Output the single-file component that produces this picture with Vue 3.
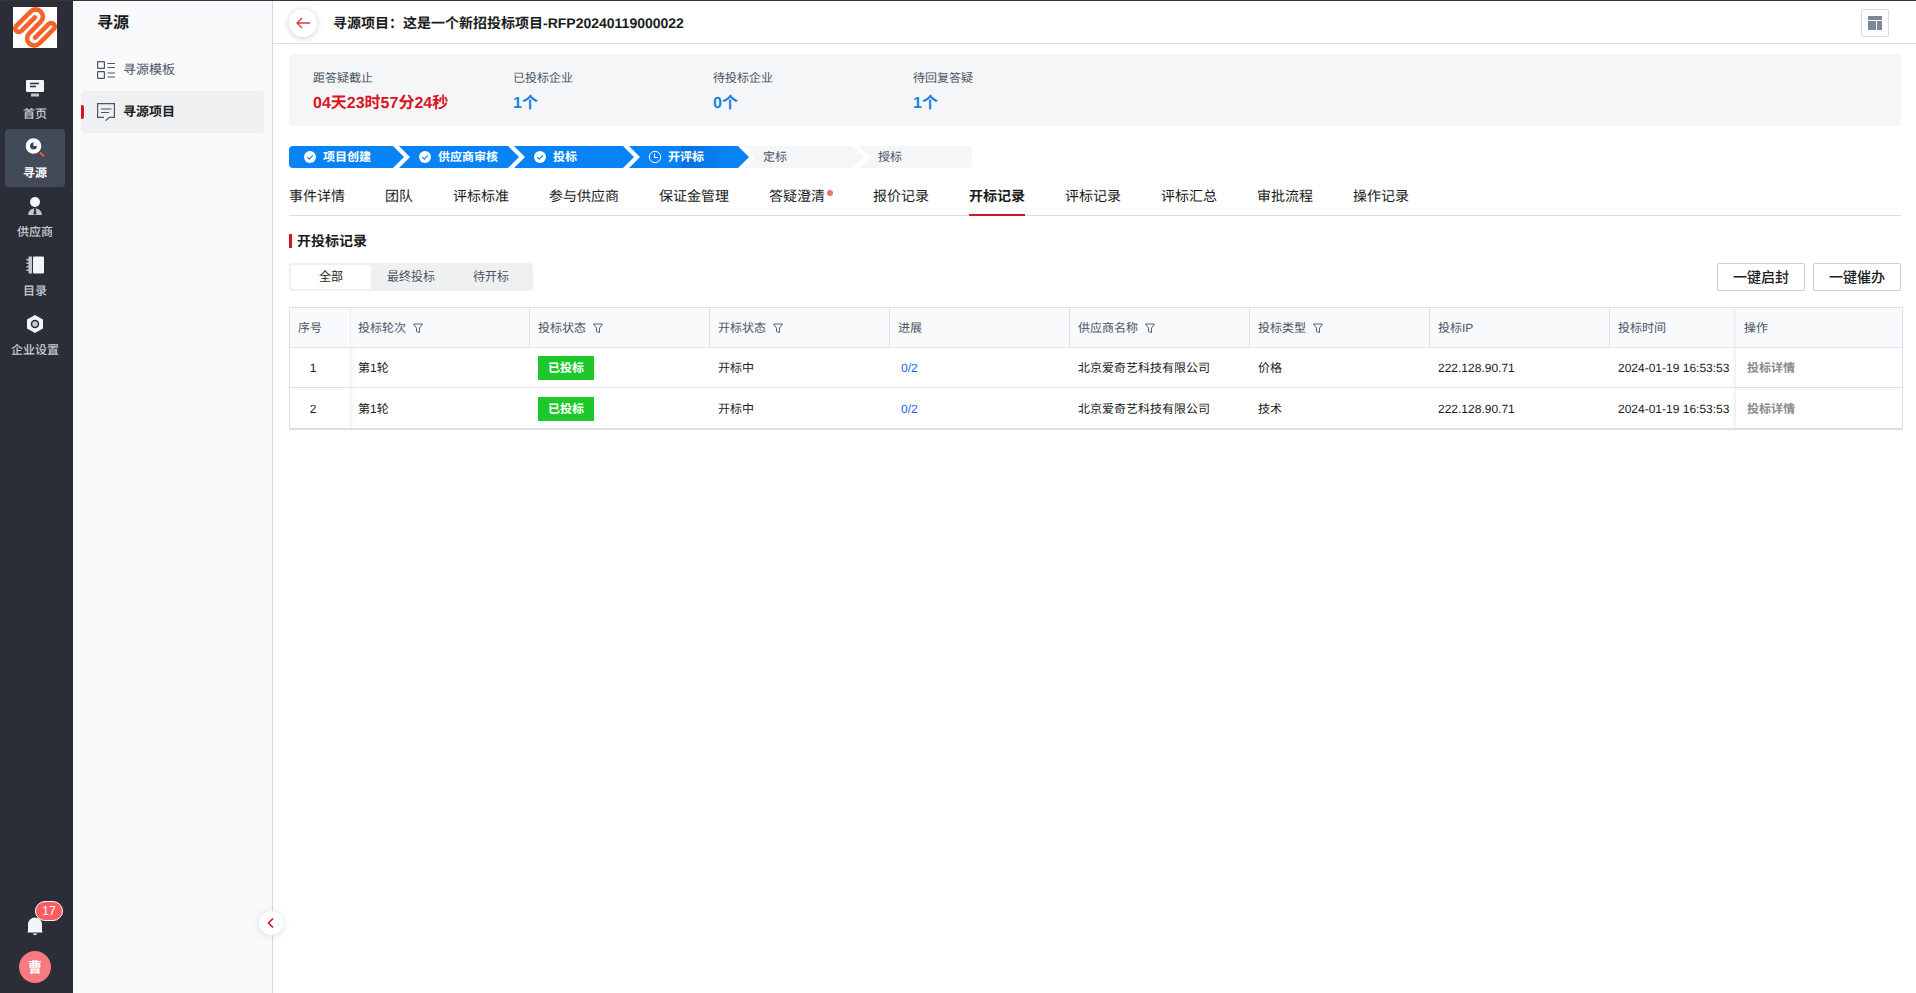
<script setup>
const rail = [
  { id: 'home', label: '首页' },
  { id: 'source', label: '寻源', active: true },
  { id: 'supplier', label: '供应商' },
  { id: 'catalog', label: '目录' },
  { id: 'settings', label: '企业设置' },
]
const stats = [
  { label: '距答疑截止', value: '04天23时57分24秒', urgent: true },
  { label: '已投标企业', value: '1个' },
  { label: '待投标企业', value: '0个' },
  { label: '待回复答疑', value: '1个' },
]
const steps = [
  { label: '项目创建', state: 'done' },
  { label: '供应商审核', state: 'done' },
  { label: '投标', state: 'done' },
  { label: '开评标', state: 'current' },
  { label: '定标', state: 'todo' },
  { label: '授标', state: 'todo' },
]
const tabs = [
  { label: '事件详情' }, { label: '团队' }, { label: '评标标准' }, { label: '参与供应商' },
  { label: '保证金管理' }, { label: '答疑澄清', dot: true }, { label: '报价记录' },
  { label: '开标记录', active: true }, { label: '评标记录' }, { label: '评标汇总' },
  { label: '审批流程' }, { label: '操作记录' },
]
const columns = [
  { label: '序号', cls: 'c-index' },
  { label: '投标轮次', filter: true, cls: 'c-round' }, { label: '投标状态', filter: true },
  { label: '开标状态', filter: true }, { label: '进展' },
  { label: '供应商名称', filter: true }, { label: '投标类型', filter: true },
  { label: '投标IP' }, { label: '投标时间', cls: 'c-time' }, { label: '操作', cls: 'c-action' },
]
const rows = [
  { no: 1, type: '价格' },
  { no: 2, type: '技术' },
]
</script>

<template>
  <div class="app">
    <nav class="rail" aria-label="主导航">
      <a href="#" class="logo" aria-label="主页">
        <svg viewBox="0 0 44 41" width="44" height="41">
          <path
            transform="translate(22 20.5) rotate(-45)"
            d="M7 -7.200H-12a3.600 3.600 0 0 1 0-7.200H8.200a7.200 7.200 0 0 1 0 14.400H-8.200a7.200 7.200 0 0 0 0 14.400H12a3.600 3.600 0 0 0 0-7.200H-7"
            fill="none" stroke="#f9602a" stroke-width="4.600" stroke-linecap="round"
          />
        </svg>
      </a>
      <ul class="rail-list">
        <li v-for="item in rail" :key="item.id">
          <a href="#" class="rail-item" :class="{ active: item.active }">
            <svg width="20" height="20" viewBox="0 0 20 20" aria-hidden="true">
              <template v-if="item.id === 'home'">
                <rect x="1" y="2" width="18" height="12" rx="1" fill="#f4f5f7" />
                <path d="M5 5.500h9M5 8.500h6" stroke="#2b2e36" stroke-width="1.300" />
                <rect x="6" y="15.500" width="8" height="3" rx=".5" fill="#c2c6ce" />
              </template>
              <template v-else-if="item.id === 'source'">
                <circle cx="8.500" cy="9" r="7.800" fill="#fff" />
                <circle cx="8.500" cy="9" r="3.500" fill="#3f4756" />
                <path d="M8.500 9V5.500A3.500 3.500 0 0 1 12 9z" fill="#fff" />
                <path d="M15 15.500l4 4" stroke="#f9602a" stroke-width="1.800" />
              </template>
              <template v-else-if="item.id === 'supplier'">
                <circle cx="10" cy="6" r="5" fill="#f4f5f7" />
                <path d="M3.200 19c0-4 2.600-6.500 6.800-6.500s6.800 2.500 6.800 6.500z" fill="#c2c6ce" />
                <path d="M8.800 12.500h2.400l-.4 2 .8 3-1.600 1.500-1.600-1.500.8-3z" fill="#2b2e36" />
              </template>
              <template v-else-if="item.id === 'catalog'">
                <path d="M3.500 1.500H7v17H3.500zM1.500 4h3v1.500h-3zM1.500 7.500h3V9h-3zM1.500 11h3v1.500h-3zM1.500 14.500h3V16h-3z" fill="#c2c6ce" />
                <rect x="8" y="1.500" width="11" height="17" rx="1" fill="#f4f5f7" />
              </template>
              <template v-else>
                <path d="M10 1l8 4.600v9L10 19l-8-4.400v-9z" fill="#f4f5f7" />
                <circle cx="10" cy="10" r="3.500" fill="#c2c6ce" stroke="#2b2e36" stroke-width="1.500" />
              </template>
            </svg>
            <span>{{ item.label }}</span>
          </a>
        </li>
      </ul>
      <button type="button" class="bell" aria-label="通知">
        <svg width="16" height="20" viewBox="0 0 16 20">
          <path d="M1 16V8.500a7 7 0 0 1 14 0V16z" fill="#f4f5f7" />
          <path d="M0.500 15.500h15v1h-15zM6 17.500h4a2 1.500 0 0 1-4 0z" fill="#f4f5f7" />
        </svg>
        <span class="badge">17</span>
      </button>
      <button type="button" class="avatar">曹</button>
    </nav>

    <aside class="side">
      <h2>寻源</h2>
      <a href="#" class="side-item">
        <svg width="18" height="18" viewBox="0 0 18 18" fill="none" stroke="#4b5565" stroke-width="1.200">
          <rect x=".6" y=".6" width="6.800" height="6.800" rx=".5" />
          <rect x=".6" y="10.600" width="6.800" height="6.800" rx=".5" />
          <path d="M10.500 2.500H18M10.500 6.500H18M10.500 12H18M10.500 16H18" />
        </svg>
        <span>寻源模板</span>
      </a>
      <a href="#" class="side-item active">
        <svg width="18" height="18" viewBox="0 0 18 18" fill="none" stroke="#4b5565" stroke-width="1.200">
          <path d="M7 14.400H.6V.6h16.800v13.800H12.500L8.500 17.600M4 6h10.500M4 9.500h8" />
        </svg>
        <span>寻源项目</span>
      </a>
      <button type="button" class="collapse" aria-label="收起">
        <svg width="12" height="12" viewBox="0 0 12 12" fill="none" stroke="#c9141f" stroke-width="1.600">
          <path d="M8 1.500L3.500 6 8 10.500" />
        </svg>
      </button>
    </aside>

    <main class="main">
      <header class="top">
        <button type="button" class="back" aria-label="返回">
          <svg width="14" height="12" viewBox="0 0 14 12" fill="none" stroke="#e0363f" stroke-width="1.300">
            <path d="M14 6H1M6 1L1 6l5 5" />
          </svg>
        </button>
        <h1>寻源项目：这是一个新招投标项目-RFP20240119000022</h1>
        <button type="button" class="layout-btn" aria-label="布局">
          <svg width="14" height="14" viewBox="0 0 14 14" fill="#7d8796">
            <path d="M0 0h14v4H0zM0 5h8v9H0zM9 5h5v9H9z" />
          </svg>
        </button>
      </header>

      <div class="content">
        <dl class="stats">
          <div v-for="s in stats" :key="s.label" class="stat">
            <dt>{{ s.label }}</dt>
            <dd :class="{ urgent: s.urgent }">{{ s.value }}</dd>
          </div>
        </dl>

        <ol class="steps">
          <li v-for="s in steps" :key="s.label" :class="s.state">
            <svg v-if="s.state === 'done'" width="14" height="14" viewBox="0 0 14 14">
              <circle cx="7" cy="7" r="6" fill="#fff" />
              <path d="M4.300 7.200l2 1.900 3.500-3.700" fill="none" stroke="#0783f5" stroke-width="1.100" />
            </svg>
            <svg v-else-if="s.state === 'current'" width="14" height="14" viewBox="0 0 14 14" fill="none" stroke="#fff">
              <circle cx="7" cy="7" r="5.700" />
              <path d="M6.500 3.500v4h3.500" />
            </svg>
            <span>{{ s.label }}</span>
          </li>
        </ol>

        <nav class="tabs" aria-label="项目信息">
          <a v-for="t in tabs" :key="t.label" href="#" :class="{ active: t.active }">
            {{ t.label }}<i v-if="t.dot" class="dot"></i>
          </a>
        </nav>

        <h3>开投标记录</h3>

        <div class="tools">
          <div class="segment">
            <button type="button" class="active">全部</button>
            <button type="button">最终投标</button>
            <button type="button">待开标</button>
          </div>
          <div class="actions">
            <button type="button">一键启封</button>
            <button type="button">一键催办</button>
          </div>
        </div>
      </div>

      <table class="grid">
        <thead>
          <tr>
            <th v-for="c in columns" :key="c.label" scope="col" :class="c.cls">
              <span class="th">{{ c.label }}
                <button v-if="c.filter" type="button" class="filter" :aria-label="c.label + '筛选'">
                  <svg width="12" height="12" viewBox="0 0 12 12" fill="none" stroke="#566173">
                    <path d="M1.500 2h9L7.500 6v4.500L4.500 9.500V6z" />
                  </svg>
                </button>
              </span>
            </th>
          </tr>
        </thead>
        <tbody>
          <tr v-for="r in rows" :key="r.no">
            <td class="c-index">{{ r.no }}</td>
            <td>第1轮</td>
            <td><span class="tag">已投标</span></td>
            <td>开标中</td>
            <td class="c-link"><a href="#">0/2</a></td>
            <td>北京爱奇艺科技有限公司</td>
            <td>{{ r.type }}</td>
            <td>222.128.90.71</td>
            <td>2024-01-19 16:53:53</td>
            <td class="c-action c-link"><a href="#" class="muted">投标详情</a></td>
          </tr>
        </tbody>
      </table>
    </main>
  </div>
</template>

<style>
body { margin: 0; background: #fff; }
</style>

<style scoped>
.app {
  display: flex;
  min-height: 100vh;
  box-sizing: border-box;
  border-top: 1px solid #33353b;
  font-family: "Liberation Sans", "Noto Sans CJK SC", sans-serif;
  font-size: 12px;
  line-height: 18px;
  color: #1a1c21;
  text-rendering: geometricPrecision;
}
.app * { box-sizing: border-box; }
a { color: inherit; text-decoration: none; }
button { font: inherit; color: inherit; padding: 0; border: 0; background: none; cursor: pointer; }
svg { display: block; flex: none; }
h1, h2, h3, ul, ol, dl, dd { margin: 0; padding: 0; list-style: none; }

.rail {
  flex: none;
  width: 73px;
  padding: 6px 8px 10px 5px;
  background: #2b2e36;
  display: flex;
  flex-direction: column;
  align-items: center;
}
.logo { background: #fff; }
.rail-list { width: 100%; margin-top: 22px; display: flex; flex-direction: column; gap: 1px; flex: 1; }
.rail-item {
  height: 58px;
  padding-top: 8px;
  border-radius: 4px;
  display: flex;
  flex-direction: column;
  align-items: center;
  gap: 7px;
  font-weight: 500;
  color: #c8ccd4;
  white-space: nowrap;
}
.rail-item.active { background: #424957; color: #fff; font-weight: 700; }
.bell { position: relative; margin-bottom: 15px; }
.badge {
  position: absolute;
  left: 8px;
  top: -15px;
  width: 28px;
  height: 20px;
  border: 1px solid #fff;
  border-radius: 10px;
  background: #fd5c63;
  color: #fff;
  line-height: 18px;
}
.avatar { width: 32px; height: 32px; border-radius: 50%; background: #f8797f; color: #fff; font-weight: 700; font-size: 14px; }

.side {
  position: relative;
  flex: none;
  width: 200px;
  padding: 11px 8px;
  background: #f9fafc;
  border-right: 1px solid #d5d8df;
}
.side h2 { padding-left: 16px; font-size: 16px; line-height: 24px; margin-bottom: 13px; }
.side-item {
  position: relative;
  display: flex;
  align-items: center;
  gap: 8px;
  height: 42px;
  padding-left: 16px;
  border-radius: 4px;
  font-size: 13px;
  color: #4b5565;
}
.side-item.active { background: #eff0f2; color: #1a1c21; font-weight: 700; }
.side-item.active::before {
  content: "";
  position: absolute;
  left: 0;
  top: 14px;
  width: 3px;
  height: 14px;
  border-radius: 0 2px 2px 0;
  background: #d0161f;
}
.collapse {
  position: absolute;
  right: -11px;
  bottom: 58px;
  width: 24px;
  height: 24px;
  border-radius: 50%;
  background: #fff;
  box-shadow: 0 1px 8px rgba(0, 0, 0, .12);
  display: grid;
  place-items: center;
}

.main { flex: 1; min-width: 0; }
.top {
  height: 43px;
  padding: 1px 27px 0 16px;
  border-bottom: 1px solid #d9dce1;
  display: flex;
  align-items: center;
}
.back {
  width: 28px;
  height: 28px;
  margin-right: 16px;
  border-radius: 50%;
  background: #fff;
  box-shadow: 0 1px 6px rgba(0, 0, 0, .2);
  display: grid;
  place-items: center;
}
.top h1 { flex: 1; font-size: 14px; line-height: 20px; }
.layout-btn { width: 28px; height: 28px; border: 1px solid #d9dce1; border-radius: 2px; display: grid; place-items: center; }

.content { padding: 10px 15px 0 16px; }
.stats { display: flex; height: 72px; padding: 15px 24px; border-radius: 4px; background: #f5f6f8; }
.stat { width: 200px; }
.stat dt { color: #4b5565; line-height: 18px; }
.stat dd { margin-top: 6px; font-size: 16px; line-height: 22px; font-weight: 700; color: #1784e0; }
.stat dd.urgent { color: #d9151f; }

.steps { display: flex; margin-top: 20px; height: 22px; }
.steps li {
  width: 120px;
  margin-left: -5px;
  padding-left: 19px;
  display: flex;
  align-items: center;
  gap: 6px;
  color: #4b5565;
  background: #f5f6f8;
  clip-path: polygon(0 0, 109px 0, 100% 50%, 109px 100%, 0 100%, 11px 50%);
}
.steps li.done { background: #0783f5; color: #fff; font-weight: 700; }
.steps li.current { background: linear-gradient(90deg, #0783f5 52px, #0670dc 52px, #0783f5 100px); color: #fff; font-weight: 700; }
.steps li:first-child {
  width: 115px;
  margin-left: 0;
  padding-left: 14px;
  border-radius: 4px 0 0 4px;
  clip-path: polygon(0 0, 104px 0, 100% 50%, 104px 100%, 0 100%);
}
.steps li:last-child {
  width: 113px;
  border-radius: 0 4px 4px 0;
  clip-path: polygon(0 0, 100% 0, 100% 100%, 0 100%, 11px 50%);
}

.tabs { display: flex; gap: 40px; height: 48px; border-bottom: 1px solid #d9dce1; font-size: 14px; }
.tabs a {
  display: flex;
  height: 48px;
  padding-top: 18px;
  line-height: 20px;
  white-space: nowrap;
}
.tabs a.active { font-weight: 700; border-bottom: 2px solid #d0161f; }
.dot { width: 6px; height: 6px; margin: 4px 0 0 2px; border-radius: 50%; background: #f56c6c; }

h3 { margin-top: 15px; display: flex; align-items: center; gap: 5px; font-size: 14px; line-height: 20px; }
h3::before { content: ""; width: 3px; height: 14px; background: #d0161f; }

.tools { display: flex; justify-content: space-between; margin-top: 12px; }
.segment { display: flex; padding: 2px; border-radius: 3px; background: #eff0f2; }
.segment button { width: 80px; height: 24px; border-radius: 2px; color: #4b5565; }
.segment button.active { background: #fff; color: #1a1c21; }
.actions { display: flex; gap: 8px; }
.actions button { width: 88px; height: 28px; border: 1px solid #cbcdd1; border-radius: 2px; background: #fff; font-size: 14px; font-weight: 500; }

.grid {
  width: calc(100% - 29px);
  margin: 16px 13px 0 16px;
  table-layout: fixed;
  border-collapse: separate;
  border-spacing: 0;
  border: 1px solid #dde0e7;
  border-bottom-width: 2px;
}
th, td { height: 40px; padding: 1px 8px 0; text-align: left; white-space: nowrap; }
th { width: 180px; background: #f9fafc; color: #4b5565; font-weight: 400; border-right: 1px solid #dde0e7; border-bottom: 1px solid #e2e5eb; }
th:last-child { border-right: 0; }
td { border-bottom: 1px solid #e2e5eb; }
tbody tr:last-child td { border-bottom: 0; }
.th { display: flex; align-items: center; gap: 6px; }
.c-index { width: 61px; border-right: 1px solid #eceef2; box-shadow: 2px 0 4px rgba(0, 0, 0, .04); }
td.c-index { padding-right: 22px; text-align: center; }
.c-round { width: 179px; padding-left: 7px; }
td.c-index + td { padding-left: 7px; }
.c-time { width: 125px; border-right: 0; }
.c-action { width: auto; border-left: 1px solid #eceef2; box-shadow: -2px 0 4px rgba(0, 0, 0, .04); }
.c-link { padding-left: 11px; color: #1765d8; }
.muted { color: #8c8c8c; font-weight: 700; }
.tag { display: inline-block; width: 56px; height: 24px; line-height: 24px; background: #1fc82a; color: #fff; font-weight: 700; text-align: center; vertical-align: middle; }
</style>
